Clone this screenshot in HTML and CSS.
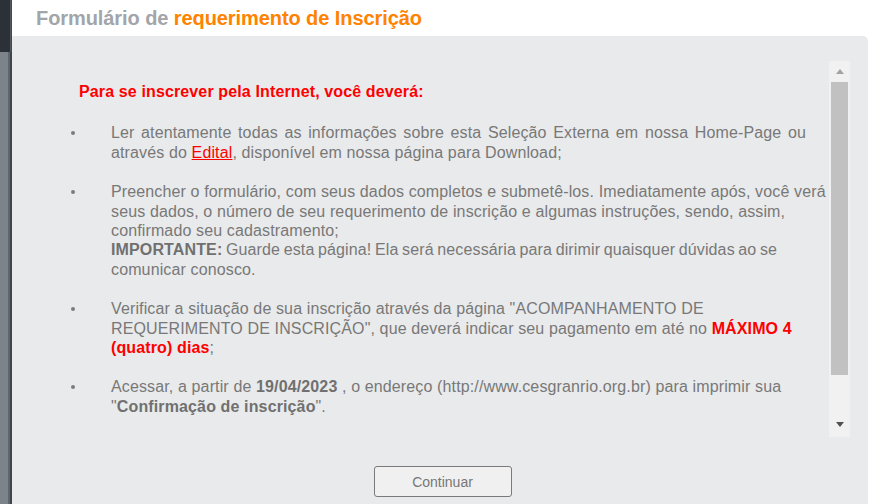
FILE: index.html
```html
<!DOCTYPE html>
<html lang="pt-BR">
<head>
<meta charset="utf-8">
<title>Formulário de requerimento de Inscrição</title>
<link rel="stylesheet" href="styles.css">
</head>
<body>
<div class="app">
  <aside class="rail">
    <div class="rail-top"></div>
    <div class="rail-bottom"></div>
  </aside>
  <main class="main">
    <header class="header">
      <h1 class="title"><span class="title-muted">Formulário de</span> <span class="title-accent">requerimento de Inscrição</span></h1>
    </header>
    <section class="panel">
      <div class="scrollbox">
        <div class="content">
          <p class="lead">Para se inscrever pela Internet, você deverá:</p>
          <ul class="steps">
            <li class="step"><span class="dot"></span><div class="step-text"><span class="loose">Ler atentamente todas as informações sobre esta Seleção Externa em nossa Home-Page ou</span><br>através do <a class="link" href="#">Edital</a>, disponível em nossa página para Download;</div></li>
            <li class="step"><span class="dot"></span><div class="step-text">Preencher o formulário, com seus dados completos e submetê-los. Imediatamente após, você verá<br>seus dados, o número de seu requerimento de inscrição e algumas instruções, sendo, assim,<br>confirmado seu cadastramento;<br><span class="tight"><b class="strong">IMPORTANTE:</b> Guarde esta página! Ela será necessária para dirimir quaisquer dúvidas ao se</span><br>comunicar conosco.</div></li>
            <li class="step"><span class="dot"></span><div class="step-text">Verificar a situação de sua inscrição através da página "ACOMPANHAMENTO DE<br>REQUERIMENTO DE INSCRIÇÃO", que deverá indicar seu pagamento em até no <b class="alert">MÁXIMO 4<br>(quatro) dias</b>;</div></li>
            <li class="step"><span class="dot"></span><div class="step-text">Acessar, a partir de <b class="strong">19/04/2023</b> , o endereço (http://www.cesgranrio.org.br) para imprimir sua<br>"<b class="strong">Confirmação de inscrição</b>".</div></li>
          </ul>
        </div>
        <div class="scrollbar">
          <div class="sb-btn"><span class="arrow-up"></span></div>
          <div class="sb-track"><div class="sb-thumb"></div></div>
          <div class="sb-btn sb-btn-down"><span class="arrow-down"></span></div>
        </div>
      </div>
      <div class="actions">
        <button class="btn" type="button">Continuar</button>
      </div>
    </section>
  </main>
</div>
</body>
</html>
```
FILE: styles.css
```css
* { box-sizing: border-box; }
html, body { margin: 0; padding: 0; }
body {
  width: 879px;
  height: 504px;
  overflow: hidden;
  background: #ffffff;
  font-family: "Liberation Sans", Arial, sans-serif;
}
.app {
  display: flex;
  height: 504px;
}
.rail {
  width: 12px;
  flex: none;
  display: flex;
  flex-direction: column;
}
.rail-top {
  height: 52px;
  background: linear-gradient(to right, #2b3137 0, #2b3137 10px, #5a6066 10px, #3c4248 12px);
}
.rail-bottom {
  flex: 1;
  background: linear-gradient(to right, #7c838b 0, #7c838b 8px, #5e656c 8px, #5e656c 10px, #3f454b 10px);
}
.main {
  flex: 1;
  display: flex;
  flex-direction: column;
  min-width: 0;
}
.header {
  height: 36px;
  padding-left: 24px;
  display: flex;
  align-items: center;
}
.title {
  margin: 0;
  font-size: 20px;
  font-weight: bold;
  line-height: 24px;
  letter-spacing: -0.08px;
}
.title-muted { color: #a2a5a9; }
.title-accent { color: #ff8200; }
.panel {
  flex: 1;
  margin-right: 11px;
  background: #e9eaeb;
  border-top-right-radius: 5px;
  padding: 25px 18px 0 36px;
  display: flex;
  flex-direction: column;
}
.scrollbox {
  height: 376px;
  display: flex;
}
.content {
  flex: 1;
  overflow: hidden;
  padding-top: 21px;
  font-size: 16px;
  line-height: 19.4px;
  color: #787878;
}
.lead {
  margin: 0 0 22px 31px;
  color: #ff0000;
  font-weight: bold;
  letter-spacing: 0.13px;
}
.steps {
  list-style: none;
  margin: 0;
  padding: 0 0 0 23px;
}
.step {
  display: grid;
  grid-template-columns: 40px 1fr;
  margin-bottom: 20px;
}
.dot {
  width: 4px;
  height: 4px;
  border-radius: 50%;
  background: #7c7c7c;
  margin-top: 8px;
}
.step-text {
  min-width: 0;
  white-space: nowrap;
  letter-spacing: 0.13px;
}
.loose { word-spacing: 2px; }
.tight { word-spacing: -1px; }
.link {
  color: #ff0000;
  text-decoration: underline;
}
.strong {
  color: #707070;
  font-weight: bold;
}
.alert {
  color: #ff0000;
  font-weight: bold;
}
.scrollbar {
  width: 21px;
  flex: none;
  display: flex;
  flex-direction: column;
  background: #f1f1f1;
}
.sb-btn {
  height: 21px;
  flex: none;
  display: flex;
  align-items: center;
  justify-content: center;
}
.sb-btn-down { align-items: flex-start; padding-top: 6px; }
.arrow-up {
  width: 0;
  height: 0;
  border-left: 4px solid transparent;
  border-right: 4px solid transparent;
  border-bottom: 5px solid #a3a3a3;
}
.arrow-down {
  width: 0;
  height: 0;
  border-left: 4px solid transparent;
  border-right: 4px solid transparent;
  border-top: 5px solid #505050;
}
.sb-track {
  flex: 1;
  padding: 0 2px;
}
.sb-thumb {
  height: 293px;
  background: #c1c1c1;
}
.actions {
  display: flex;
  justify-content: center;
  padding: 29px 13px 0 0;
}
.btn {
  width: 138px;
  height: 31px;
  border: 1px solid #7a7a7a;
  border-radius: 3px;
  background: #f0f0f0;
  color: #777777;
  font-family: "Liberation Sans", Arial, sans-serif;
  font-size: 14px;
  padding: 0;
}
```
